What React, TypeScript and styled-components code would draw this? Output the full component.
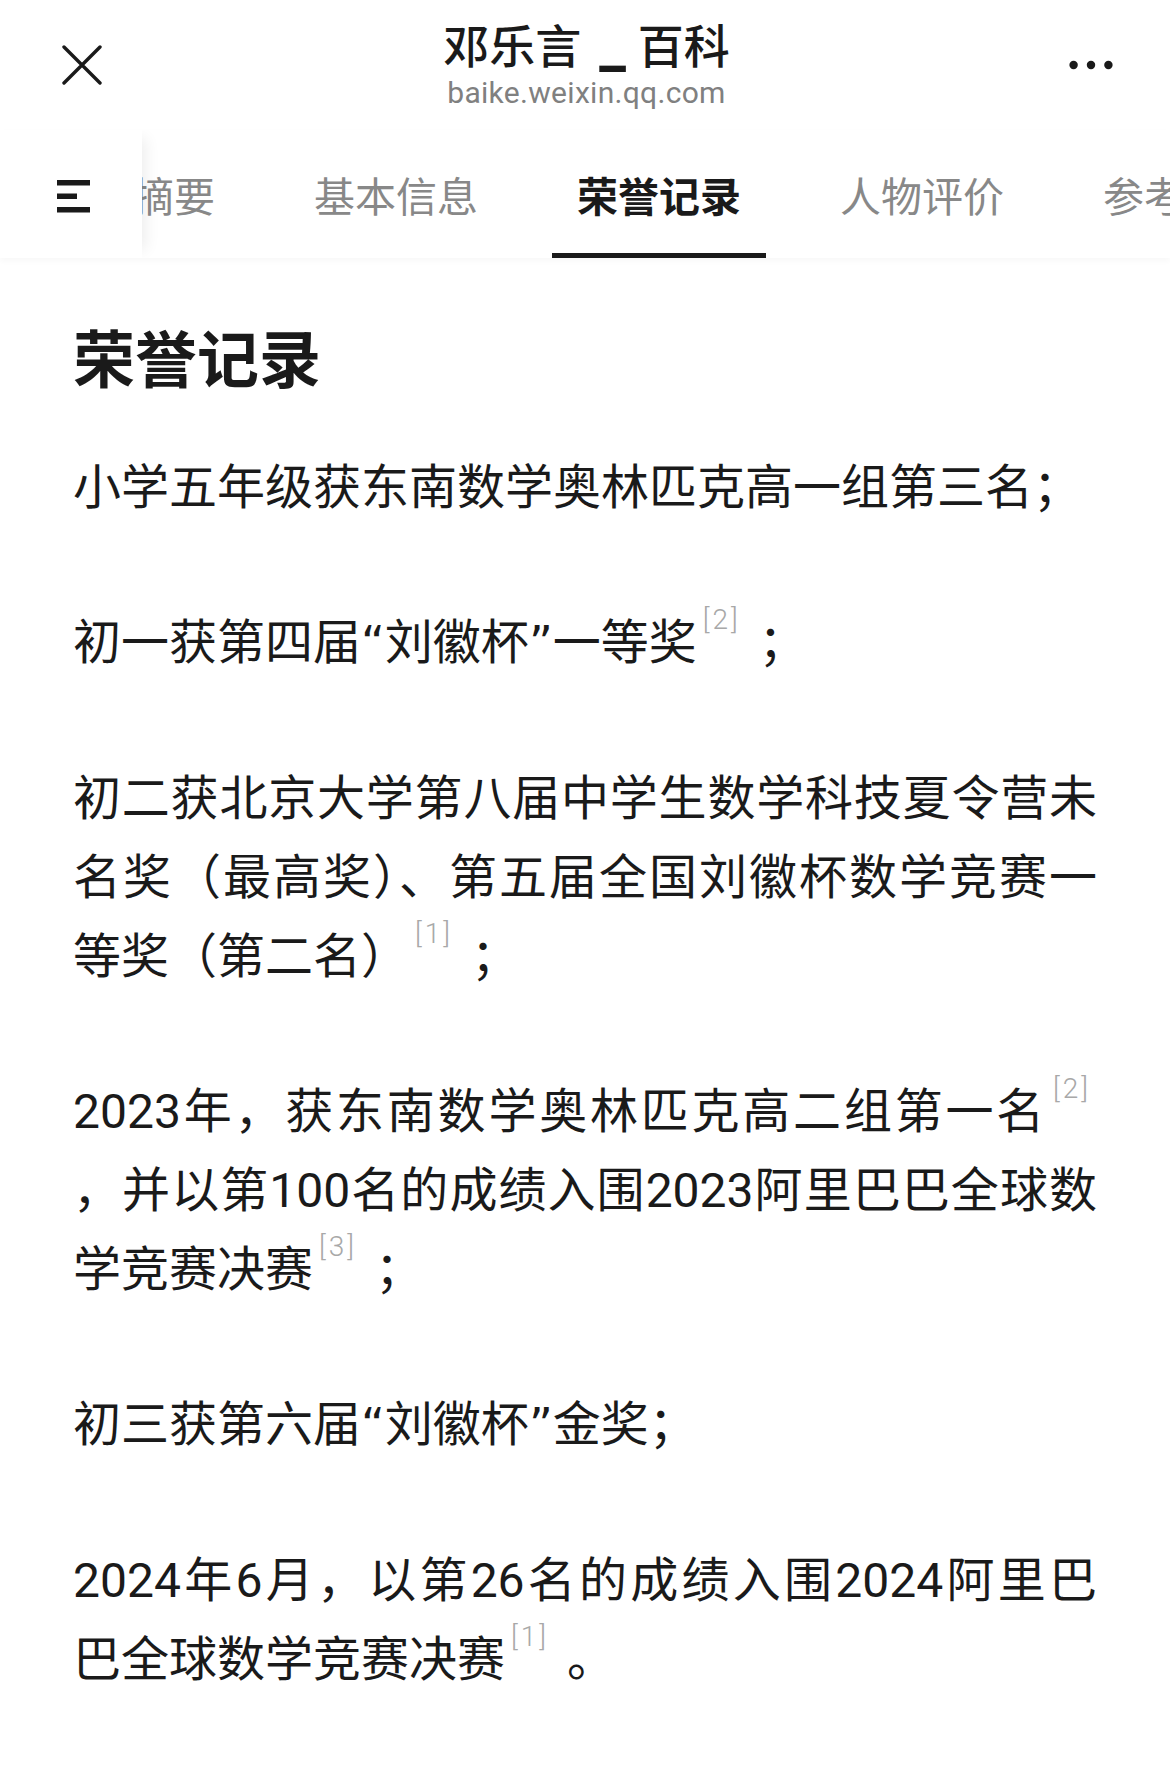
import styled, { createGlobalStyle } from 'styled-components'

const GlobalStyle = createGlobalStyle`
  html, body {
    margin: 0;
    padding: 0;
    background: #ffffff;
  }
  body {
    font-family: Roboto, "Noto Sans CJK SC", sans-serif;
    color: #1a1a1a;
  }
`

const Page = styled.div`
  width: 1170px;
  min-height: 1772px;
  background: #ffffff;
`

const NavBar = styled.header`
  height: 130px;
  display: grid;
  grid-template-columns: 1fr auto 1fr;
  align-items: center;
  padding: 0 57px 0 60px;
`

const IconButton = styled.button<{ $right?: boolean }>`
  justify-self: ${(p) => (p.$right ? 'end' : 'start')};
  display: flex;
  align-items: center;
  justify-content: center;
  width: 44px;
  height: 44px;
  padding: 0;
  border: none;
  background: none;
  color: #1a1a1a;
`

const TitleBlock = styled.div`
  display: flex;
  flex-direction: column;
  align-items: center;
`

const Title = styled.h1`
  margin: 0;
  font-size: 46px;
  line-height: 56px;
  font-weight: 500;
  color: #1a1a1a;
`

const Sep = styled.span`
  display: inline-block;
  margin: 0 12px 0 18px;
  font-size: 60px;
  line-height: 0;
  font-weight: 700;
  position: relative;
  top: 3px;
`

const Url = styled.div`
  font-size: 30px;
  line-height: 36px;
  color: #808080;
  letter-spacing: 0.3px;
`

const TabBar = styled.nav`
  display: flex;
  height: 128px;
  overflow: hidden;
  box-shadow: 0 3px 6px rgba(0, 0, 0, 0.03);
`

const MenuCell = styled.div`
  position: relative;
  z-index: 1;
  flex: 0 0 142px;
  display: flex;
  align-items: center;
  padding: 4px 0 0 57px;
  box-sizing: border-box;
  background: #ffffff;
  box-shadow: 12px 0 14px -8px rgba(0, 0, 0, 0.07);
`

const TabList = styled.div`
  display: flex;
  gap: 49px;
  margin-left: -34px;
  flex-shrink: 0;
`

const Tab = styled.div<{ $active?: boolean }>`
  display: flex;
  align-items: center;
  height: 128px;
  box-sizing: border-box;
  padding: 5px 25px 0;
  border-bottom: 5px solid ${(p) => (p.$active ? '#1a1a1a' : 'transparent')};
  font-size: 41px;
  font-weight: ${(p) => (p.$active ? 700 : 400)};
  color: ${(p) => (p.$active ? '#1a1a1a' : '#888888')};
  white-space: nowrap;
`

const Article = styled.main`
  padding: 64px 73px 40px;
`

const Heading = styled.h2`
  margin: 0 0 46px;
  font-size: 62px;
  line-height: 80px;
  font-weight: 700;
`

const Para = styled.div`
  width: 1024px;
  margin: 0 0 76px;
  font-size: 48px;
  line-height: 79px;
`

// wrapped lines are justified to the full column width, last line is not
const Line = styled.span<{ $full?: boolean }>`
  display: block;
  white-space: nowrap;
  text-align: ${(p) => (p.$full ? 'justify' : 'left')};
  text-align-last: ${(p) => (p.$full ? 'justify' : 'auto')};
`

const QuoteMark = styled.span`
  font-family: "DejaVu Sans", sans-serif;
  font-size: 46px;
`

const Ref = styled.sup`
  position: relative;
  top: -30px;
  vertical-align: baseline;
  margin: 0 6px 0 6px;
  font-size: 28px;
  line-height: 0;
  font-weight: 300;
  letter-spacing: 3px;
  color: #a8a8a8;
`

const CloseIcon = () => (
  <svg width="40" height="40" viewBox="0 0 40 40">
    <path d="M2 2 L38 38 M38 2 L2 38" stroke="currentColor" strokeWidth="3.4" strokeLinecap="round" />
  </svg>
)

const MoreIcon = () => (
  <svg width="48" height="10" viewBox="0 0 48 10">
    <circle cx="5" cy="5" r="4.6" fill="currentColor" />
    <circle cx="24" cy="5" r="4.6" fill="currentColor" />
    <circle cx="43" cy="5" r="4.6" fill="currentColor" />
  </svg>
)

const MenuIcon = () => (
  <svg width="34" height="33" viewBox="0 0 34 33">
    <rect x="0" y="0" width="33" height="5.5" fill="#1a1a1a" />
    <rect x="0" y="13.5" width="20" height="5.5" fill="#1a1a1a" />
    <rect x="0" y="27" width="33" height="5.5" fill="#1a1a1a" />
  </svg>
)

const tabs = ['摘要', '基本信息', '荣誉记录', '人物评价', '参考资料']

const Quoted = ({ children }: { children: string }) => (
  <>
    <QuoteMark>“</QuoteMark>
    {children}
    <QuoteMark>”</QuoteMark>
  </>
)

export default function App() {
  return (
    <>
      <GlobalStyle />
      <Page>
        <NavBar>
          <IconButton>
            <CloseIcon />
          </IconButton>
          <TitleBlock>
            <Title>
              邓乐言<Sep>_</Sep>百科
            </Title>
            <Url>baike.weixin.qq.com</Url>
          </TitleBlock>
          <IconButton $right>
            <MoreIcon />
          </IconButton>
        </NavBar>

        <TabBar>
          <MenuCell>
            <MenuIcon />
          </MenuCell>
          <TabList>
            {tabs.map((t) => (
              <Tab key={t} $active={t === '荣誉记录'}>
                {t}
              </Tab>
            ))}
          </TabList>
        </TabBar>

        <Article>
          <Heading>荣誉记录</Heading>
          <Para>
            <Line>小学五年级获东南数学奥林匹克高一组第三名；</Line>
          </Para>
          <Para>
            <Line>
              初一获第四届<Quoted>刘徽杯</Quoted>一等奖<Ref>[2]</Ref> ；
            </Line>
          </Para>
          <Para>
            <Line $full>初二获北京大学第八届中学生数学科技夏令营未</Line>
            <Line $full>名奖（最高奖）、第五届全国刘徽杯数学竞赛一</Line>
            <Line>
              等奖（第二名）<Ref>[1]</Ref> ；
            </Line>
          </Para>
          <Para>
            <Line $full>
              2023年，获东南数学奥林匹克高二组第一名<Ref>[2]</Ref>
            </Line>
            <Line $full>，并以第100名的成绩入围2023阿里巴巴全球数</Line>
            <Line>
              学竞赛决赛<Ref>[3]</Ref> ；
            </Line>
          </Para>
          <Para>
            <Line>
              初三获第六届<Quoted>刘徽杯</Quoted>金奖；
            </Line>
          </Para>
          <Para>
            <Line $full>2024年6月，以第26名的成绩入围2024阿里巴</Line>
            <Line>
              巴全球数学竞赛决赛<Ref>[1]</Ref> 。
            </Line>
          </Para>
        </Article>
      </Page>
    </>
  )
}
